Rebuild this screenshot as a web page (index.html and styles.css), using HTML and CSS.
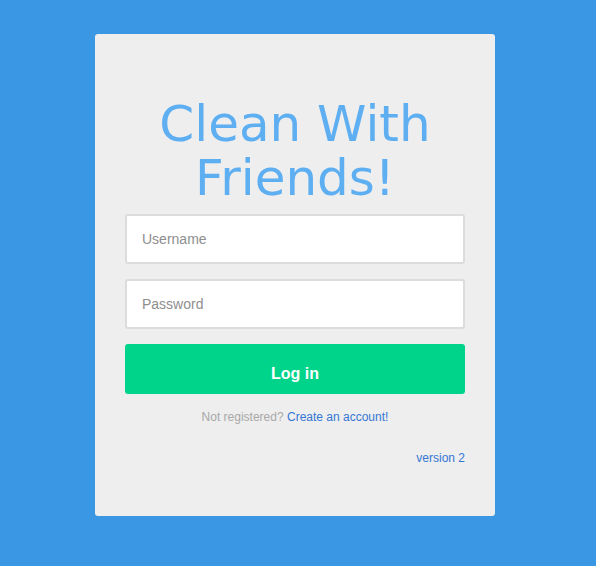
FILE: index.html
```html
<!DOCTYPE html>
<html>
<head>
<meta charset="utf-8">
<link rel="stylesheet" href="styles.css">
</head>
<body>
<div class="card">
  <h1 class="title">Clean With Friends!</h1>
  <form class="form">
    <input class="field" type="text" placeholder="Username">
    <input class="field" type="password" placeholder="Password">
    <button class="btn" type="button">Log in</button>
  </form>
  <p class="register">Not registered? <a href="#">Create an account!</a></p>
  <div class="version"><a href="#">version 2</a></div>
</div>
</body>
</html>
```
FILE: styles.css
```css
html, body {
  margin: 0;
  padding: 0;
  background: #3a97e3;
  height: 100%;
}
body {
  display: flex;
  align-items: flex-start;
  padding: 34px 0 0 95px;
  box-sizing: border-box;
  font-family: "Liberation Sans", Arial, sans-serif;
}
.card {
  width: 400px;
  height: 482px;
  box-sizing: border-box;
  background: #eeeeee;
  border-radius: 3px;
  padding: 63px 30px 0 30px;
}
.title {
  margin: 0 0 9px 0;
  font-family: "DejaVu Sans", Verdana, sans-serif;
  font-weight: normal;
  font-size: 50px;
  line-height: 54px;
  color: #5eaef2;
  text-align: center;
}
.form {
  display: flex;
  flex-direction: column;
  gap: 15px;
}
.field {
  height: 50px;
  box-sizing: border-box;
  border: 2px solid #dcdcdc;
  border-radius: 3px;
  background: #fff;
  padding: 0 15px;
  font-family: "Liberation Sans", Arial, sans-serif;
  font-size: 14px;
  color: #333;
  outline: none;
}
.field::placeholder {
  color: #8e8e8e;
}
.btn {
  height: 50px;
  padding: 10px 0 0 0;
  border: none;
  border-radius: 3px;
  background: #00d48a;
  color: #fff;
  font-family: "Liberation Sans", Arial, sans-serif;
  font-weight: bold;
  font-size: 16px;
}
.register {
  margin: 16px 0 0 0;
  text-align: center;
  font-size: 12px;
  color: #a8a8a8;
}
.register a, .version a {
  color: #3576d4;
  text-decoration: none;
}
.version {
  margin-top: 27px;
  text-align: right;
  font-size: 12px;
}
```
